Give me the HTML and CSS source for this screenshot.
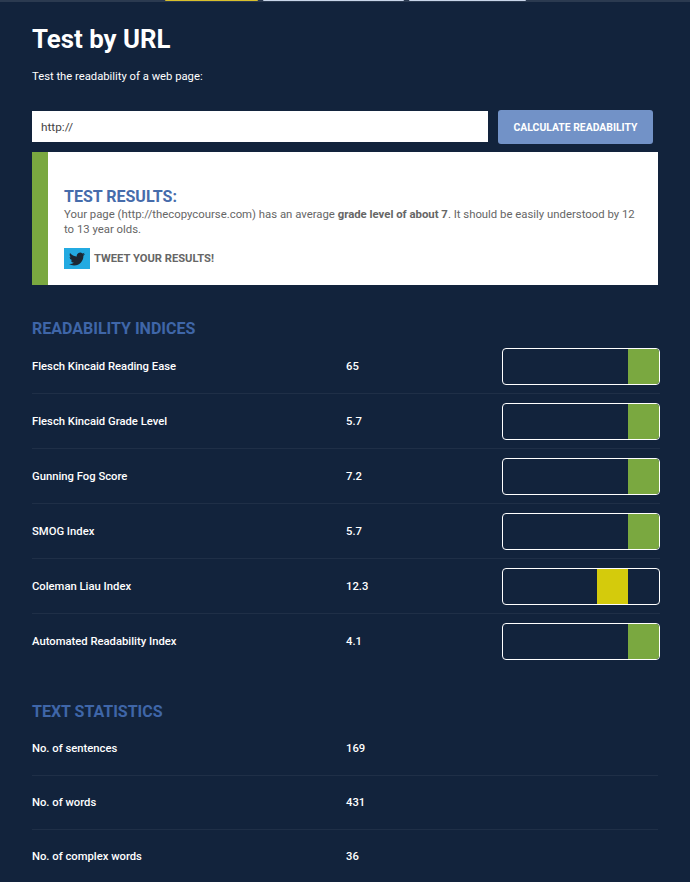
FILE: index.html
```html
<!DOCTYPE html>
<html lang="en">
<head>
<meta charset="utf-8">
<title>Test by URL</title>
<link rel="stylesheet" href="styles.css">
</head>
<body>
<div class="topstrip">
  <span class="tab tab-yellow"></span>
  <span class="tab tab-blue-a"></span>
  <span class="tab tab-blue-b"></span>
</div>
<main class="page">
  <h1 class="title">Test by URL</h1>
  <p class="lead">Test the readability of a web page:</p>
  <form class="url-form">
    <input class="url-input" type="text" value="http://">
    <button class="calc-btn" type="button">CALCULATE READABILITY</button>
  </form>
  <section class="results">
    <h2 class="results-title">TEST RESULTS:</h2>
    <p class="results-text">Your page (http://thecopycourse.com) has an average <b>grade level of about 7</b>. It should be easily understood by 12 to 13 year olds.</p>
    <div class="tweet">
      <span class="tweet-icon">
        <svg viewBox="0 0 24 24" width="16" height="16"><path fill="#1c2733" d="M23.95 4.57a10 10 0 0 1-2.82.77 4.96 4.96 0 0 0 2.16-2.72c-.95.55-2 .96-3.12 1.19a4.92 4.92 0 0 0-8.38 4.48C7.69 8.1 4.07 6.13 1.64 3.16a4.82 4.82 0 0 0-.66 2.47c0 1.71.87 3.21 2.19 4.1a4.9 4.9 0 0 1-2.23-.61v.06a4.92 4.92 0 0 0 3.95 4.83 5 5 0 0 1-2.21.08 4.94 4.94 0 0 0 4.6 3.42A9.87 9.87 0 0 1 0 19.54a14 14 0 0 0 7.56 2.21c9.05 0 14-7.5 14-13.98 0-.21 0-.42-.02-.63a9.94 9.94 0 0 0 2.41-2.57z"/></svg>
      </span>
      <span class="tweet-label">TWEET YOUR RESULTS!</span>
    </div>
  </section>

  <h2 class="section-title indices-title">READABILITY INDICES</h2>
  <div class="row"><span class="row-name">Flesch Kincaid Reading Ease</span><span class="row-val">65</span><span class="meter"><i class="fill green"></i></span></div>
  <div class="row"><span class="row-name">Flesch Kincaid Grade Level</span><span class="row-val">5.7</span><span class="meter"><i class="fill green"></i></span></div>
  <div class="row"><span class="row-name">Gunning Fog Score</span><span class="row-val">7.2</span><span class="meter"><i class="fill green"></i></span></div>
  <div class="row"><span class="row-name">SMOG Index</span><span class="row-val">5.7</span><span class="meter"><i class="fill green"></i></span></div>
  <div class="row"><span class="row-name">Coleman Liau Index</span><span class="row-val">12.3</span><span class="meter"><i class="fill yellow"></i></span></div>
  <div class="row last"><span class="row-name">Automated Readability Index</span><span class="row-val">4.1</span><span class="meter"><i class="fill green"></i></span></div>

  <h2 class="section-title stats-title">TEXT STATISTICS</h2>
  <div class="stat"><span class="row-name">No. of sentences</span><span class="row-val">169</span></div>
  <div class="stat"><span class="row-name">No. of words</span><span class="row-val">431</span></div>
  <div class="stat"><span class="row-name">No. of complex words</span><span class="row-val">36</span></div>
</main>
</body>
</html>
```
FILE: styles.css
```css
* { box-sizing: border-box; }
html, body { margin: 0; padding: 0; }
body {
  background: #12233c;
  color: #fff;
  font-family: Roboto, "Liberation Sans", sans-serif;
  height: 882px;
  overflow: hidden;
}
.topstrip {
  height: 2px;
  background: #2b3a50;
  display: flex;
  padding-left: 165px;
  gap: 5px;
}
.tab { display: block; height: 1px; border-radius: 0 0 3px 3px; }
.tab-yellow { width: 93px; background: #d9c02c; }
.tab-blue-a { width: 141px; background: #c9d6ea; }
.tab-blue-b { width: 117px; background: #c9d6ea; }
.page { padding: 0 0 0 32px; }
.title {
  margin: 21px 0 0;
  font-size: 25.8px;
  line-height: 32px;
  font-weight: 700;
}
.lead {
  margin: 14px 0 0;
  font-size: 11.25px;
  line-height: 16px;
  font-weight: 400;
}
.url-form {
  display: flex;
  align-items: center;
  margin-top: 25px;
  height: 34px;
}
.url-input {
  width: 456px;
  height: 31px;
  margin-bottom: 1px;
  border: 0;
  padding: 0 9px;
  background: #fff;
  color: #444;
  font: 400 11.8px Roboto, sans-serif;
  outline: none;
}
.calc-btn {
  width: 155px;
  height: 34px;
  margin-left: 10px;
  border: 0;
  border-radius: 3px;
  background: #7292c7;
  color: #fff;
  font: 700 10.4px Roboto, sans-serif;
  padding: 0;
}
.results {
  width: 626px;
  height: 133px;
  margin-top: 8px;
  background: #fff;
  border-left: 16px solid #7aa840;
  padding: 34px 16px 0;
  color: #666;
}
.results-title {
  margin: 0;
  font-size: 16px;
  line-height: 21px;
  font-weight: 700;
  color: #466cab;
}
.results-text {
  margin: 0;
  font-size: 11.35px;
  line-height: 15px;
}
.results-text b { font-weight: 700; }
.tweet {
  display: flex;
  align-items: center;
  margin-top: 11px;
}
.tweet-icon {
  width: 26px;
  height: 21px;
  background: #23aae1;
  display: flex;
  justify-content: center;
  align-items: center;
}
.tweet-label {
  margin-left: 4px;
  font-size: 11.2px;
  font-weight: 700;
  color: #666;
}
.section-title {
  margin: 0;
  font-size: 16px;
  line-height: 20px;
  font-weight: 700;
  color: #3f66a8;
}
.indices-title { margin-top: 34px; }
.stats-title { margin-top: 33px; }
.row {
  display: flex;
  align-items: center;
  width: 628px;
  height: 55px;
  border-bottom: 1px solid #1f2f47;
}
.row.last { border-bottom-color: transparent; }
.row-name {
  width: 314px;
  font-size: 11.25px;
  font-weight: 500;
}
.row-val {
  font-size: 11.25px;
  font-weight: 500;
}
.row .row-val { width: 156px; }
.meter {
  display: block;
  position: relative;
  width: 158px;
  height: 37px;
  margin-top: 1px;
  border: 1px solid #fff;
  border-radius: 4px;
  overflow: hidden;
  flex: none;
}
.fill { display: block; position: absolute; top: 0; bottom: 0; }
.fill.green { right: 0; width: 31px; background: #7aa840; }
.fill.yellow { right: 31px; width: 31px; background: #d4cb0c; }
.stat {
  display: flex;
  align-items: center;
  width: 626px;
  height: 54px;
  border-bottom: 1px solid #1f2f47;
}
```
